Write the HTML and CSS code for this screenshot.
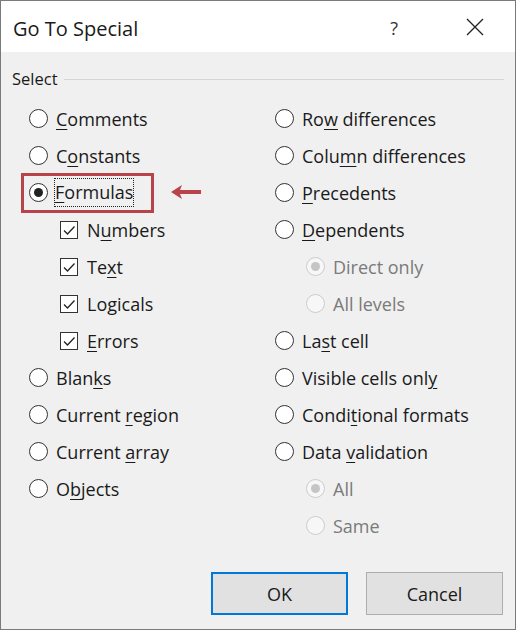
FILE: index.html
```html
<!DOCTYPE html>
<html>
<head>
<meta charset="utf-8">
<link rel="stylesheet" href="styles.css">
</head>
<body>
<div class="window">
  <div class="titlebar">
    <span class="title">Go To Special</span>
    <span class="help">?</span>
    <svg class="close" width="18" height="18" viewBox="0 0 18 18"><path d="M1 1 L17 17 M17 1 L1 17" stroke="#222" stroke-width="1.3" fill="none"/></svg>
  </div>
  <div class="content">
    <div class="group-head"><span>Select</span><div class="rule"></div></div>
    <div class="cols">
      <div class="col">
        <div class="row"><span class="radio"></span><span class="lbl"><u>C</u>omments</span></div>
        <div class="row"><span class="radio"></span><span class="lbl">C<u>o</u>nstants</span></div>
        <div class="row"><span class="radio checked"></span><span class="lbl focus"><u>F</u>ormulas</span></div>
        <div class="row sub"><span class="check"><svg width="16" height="16" viewBox="0 0 16 16"><path d="M3 8.5 L6.5 12 L13.5 4.5" stroke="#222" stroke-width="1.3" fill="none"/></svg></span><span class="lbl">N<u>u</u>mbers</span></div>
        <div class="row sub"><span class="check"><svg width="16" height="16" viewBox="0 0 16 16"><path d="M3 8.5 L6.5 12 L13.5 4.5" stroke="#222" stroke-width="1.3" fill="none"/></svg></span><span class="lbl">Te<u>x</u>t</span></div>
        <div class="row sub"><span class="check"><svg width="16" height="16" viewBox="0 0 16 16"><path d="M3 8.5 L6.5 12 L13.5 4.5" stroke="#222" stroke-width="1.3" fill="none"/></svg></span><span class="lbl">Lo<u>g</u>icals</span></div>
        <div class="row sub"><span class="check"><svg width="16" height="16" viewBox="0 0 16 16"><path d="M3 8.5 L6.5 12 L13.5 4.5" stroke="#222" stroke-width="1.3" fill="none"/></svg></span><span class="lbl"><u>E</u>rrors</span></div>
        <div class="row"><span class="radio"></span><span class="lbl">Blan<u>k</u>s</span></div>
        <div class="row"><span class="radio"></span><span class="lbl">Current <u>r</u>egion</span></div>
        <div class="row"><span class="radio"></span><span class="lbl">Current <u>a</u>rray</span></div>
        <div class="row"><span class="radio"></span><span class="lbl">O<u>b</u>jects</span></div>
      </div>
      <div class="col">
        <div class="row"><span class="radio"></span><span class="lbl">Ro<u>w</u> differences</span></div>
        <div class="row"><span class="radio"></span><span class="lbl">Colu<u>m</u>n differences</span></div>
        <div class="row"><span class="radio"></span><span class="lbl"><u>P</u>recedents</span></div>
        <div class="row"><span class="radio"></span><span class="lbl"><u>D</u>ependents</span></div>
        <div class="row sub disabled"><span class="radio checked"></span><span class="lbl">Direct only</span></div>
        <div class="row sub disabled"><span class="radio"></span><span class="lbl">All levels</span></div>
        <div class="row"><span class="radio"></span><span class="lbl">La<u>s</u>t cell</span></div>
        <div class="row"><span class="radio"></span><span class="lbl">Visible cells onl<u>y</u></span></div>
        <div class="row"><span class="radio"></span><span class="lbl">Condi<u>t</u>ional formats</span></div>
        <div class="row"><span class="radio"></span><span class="lbl">Data <u>v</u>alidation</span></div>
        <div class="row sub disabled"><span class="radio checked"></span><span class="lbl">All</span></div>
        <div class="row sub disabled"><span class="radio"></span><span class="lbl">Same</span></div>
      </div>
    </div>
    <div class="buttons">
      <button class="btn default">OK</button>
      <button class="btn">Cancel</button>
    </div>
    <div class="highlight"></div>
    <svg class="arrow" width="32" height="16" viewBox="0 0 32 16"><path d="M0 8 L11 1 L9 6 L30 6 L30 10 L9 10 L11 15 Z" fill="#b8444a"/></svg>
  </div>
</div>
</body>
</html>
```
FILE: styles.css
```css
html, body {
  margin: 0;
  padding: 0;
}
body {
  font-family: "Open Sans", "Noto Sans", sans-serif;
  color: #1a1a1a;
  width: 516px;
  height: 630px;
  overflow: hidden;
}
.window {
  box-sizing: border-box;
  width: 516px;
  height: 630px;
  border: 1px solid #7a7a7a;
  display: flex;
  flex-direction: column;
  background: #f0f0f0;
}
.titlebar {
  height: 51px;
  background: #fff;
  display: flex;
  align-items: center;
  padding-left: 12px;
  flex-shrink: 0;
}
.title {
  font-size: 20px;
  flex: 1;
  padding-top: 3px;
}
.help {
  font-size: 18px;
  color: #333;
  margin-right: 68px;
  padding-top: 2px;
}
.close {
  margin-right: 31px;
}
.content {
  flex: 1;
  position: relative;
  display: flex;
  flex-direction: column;
  padding: 15px 11px 14px 11px;
}
.group-head {
  display: flex;
  align-items: center;
  font-size: 16.5px;
  height: 22px;
}
.group-head .rule {
  flex: 1;
  height: 1px;
  background: #d5d5d5;
  margin-left: 6px;
  margin-top: 2px;
}
.cols {
  display: grid;
  grid-template-columns: 246px 1fr;
  margin-top: 11px;
  padding-left: 17px;
}
.row {
  height: 37px;
  display: flex;
  align-items: center;
  font-size: 18px;
}
.row.sub {
  padding-left: 31px;
}
.radio {
  box-sizing: border-box;
  width: 19px;
  height: 19px;
  border: 1px solid #333;
  border-radius: 50%;
  background: #fff;
  margin-right: 8px;
  flex-shrink: 0;
  display: flex;
  align-items: center;
  justify-content: center;
}
.radio.checked::after {
  content: "";
  width: 9px;
  height: 9px;
  border-radius: 50%;
  background: #222;
}
.check {
  box-sizing: border-box;
  width: 18px;
  height: 18px;
  border: 1px solid #333;
  background: #fff;
  margin-right: 9px;
  flex-shrink: 0;
  display: flex;
  align-items: center;
  justify-content: center;
}
.disabled .radio {
  border-color: #cccccc;
  background: #f7f7f7;
}
.disabled .radio.checked::after {
  background: #c5c5c5;
}
.disabled .lbl {
  color: #7a7a7a;
}
.lbl u {
  text-underline-offset: 3px;
  text-decoration-thickness: 1px;
}
.focus {
  outline: 1px dotted #222;
  outline-offset: 0;
  padding: 1px 0 2px 0;
  margin-left: -1px;
}
.buttons {
  margin-top: auto;
  display: flex;
  justify-content: flex-end;
  gap: 18px;
  padding-right: 1px;
}
.btn {
  box-sizing: border-box;
  width: 137px;
  height: 43px;
  background: #e1e1e1;
  border: 1px solid #adadad;
  font-family: "Open Sans", "Noto Sans", sans-serif;
  font-size: 18px;
  color: #1a1a1a;
  padding: 0;
}
.btn.default {
  border: 2px solid #0078d7;
}
.highlight {
  position: absolute;
  left: 20px;
  top: 121px;
  width: 133px;
  height: 40px;
  box-sizing: border-box;
  border: 3px solid #b8444a;
}
.arrow {
  position: absolute;
  left: 170px;
  top: 132px;
}
```
